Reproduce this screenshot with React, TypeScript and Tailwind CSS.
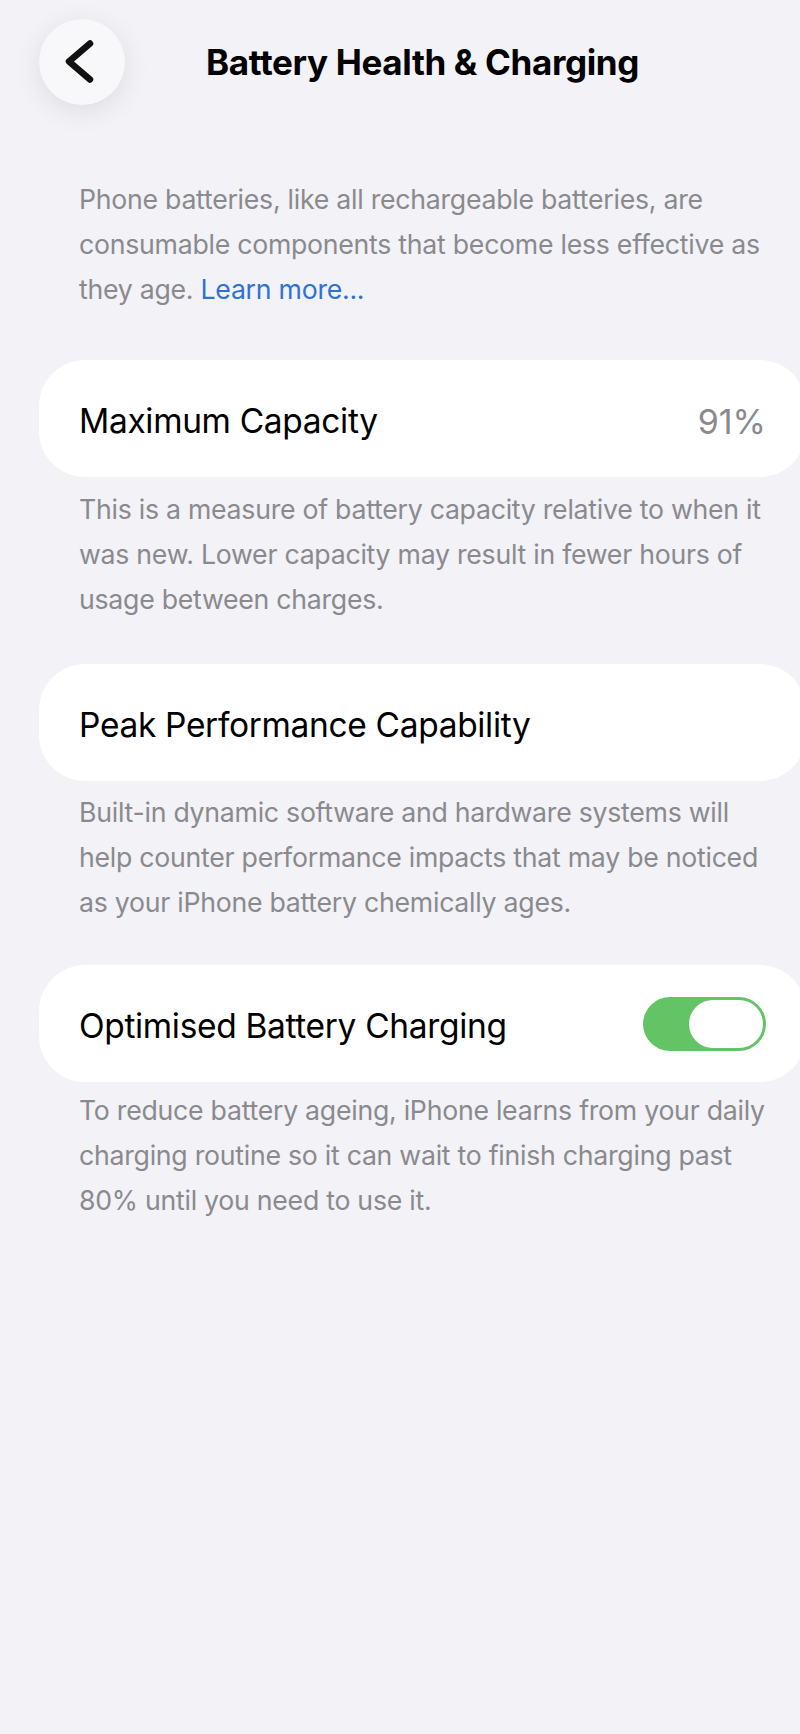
import React from "react";

const font = { fontFamily: "Inter, 'Noto Sans', sans-serif" };

function Footer({ children }: { children: React.ReactNode }) {
  return (
    <p className="pl-[79px] pr-[67px] text-[26.7px] leading-[45px] text-[#8a8a8e] tracking-[-0.01em]">
      {children}
    </p>
  );
}

function Row({ label, right }: { label: string; right?: React.ReactNode }) {
  return (
    <div className="mx-[39px] flex h-[117px] items-center justify-between rounded-[46px] bg-white pl-[40px] pr-[40px]">
      <span className="pt-[5px] text-[33.5px] text-black tracking-[-0.01em]">{label}</span>
      {right}
    </div>
  );
}

function Toggle() {
  return (
    <div className="flex h-[54px] w-[123px] items-center justify-end rounded-full bg-[#63c466] p-[3px]">
      <div className="h-[48px] w-[74px] rounded-full bg-white" />
    </div>
  );
}

export default function App() {
  return (
    <div className="min-h-[1734px] w-[800px] overflow-hidden bg-[#f2f2f7]" style={font}>
      <div className="w-[845px]">
        {/* nav bar */}
        <div className="relative flex h-[124px] items-start">
          <button className="ml-[39px] mt-[19px] h-[86px] w-[86px] rounded-full bg-[#f8f8fa] shadow-[0_6px_28px_rgba(0,0,0,0.09)]">
            <svg width="86" height="86" viewBox="0 0 86 86">
              <path d="M51 24.5 L30 42.5 L51 60.5" fill="none" stroke="#111" strokeWidth="6.5" strokeLinecap="round" strokeLinejoin="round" />
            </svg>
          </button>
          <h1 className="absolute left-0 right-0 top-[39px] text-center text-[35px] font-bold leading-[46px] text-black tracking-[-0.01em]">
            Battery Health &amp; Charging
          </h1>
        </div>

        <div className="pt-[53px]">
          <Footer>
            Phone batteries, like all rechargeable batteries, are consumable components that become less effective as they age.{" "}
            <span className="text-[#2f72d4]">Learn more...</span>
          </Footer>
        </div>

        <div className="mt-[48px]">
          <Row label="Maximum Capacity" right={<span className="pt-[5px] text-[34px] text-[#8a8a8e]">91%</span>} />
          <div className="mt-[10px]">
            <Footer>
              This is a measure of battery capacity relative to when it was new. Lower capacity may result in fewer hours of usage between charges.
            </Footer>
          </div>
        </div>

        <div className="mt-[42px]">
          <Row label="Peak Performance Capability" />
          <div className="mt-[9px]">
            <Footer>
              Built-in dynamic software and hardware systems will help counter performance impacts that may be noticed as your iPhone battery chemically ages.
            </Footer>
          </div>
        </div>

        <div className="mt-[40px]">
          <Row label="Optimised Battery Charging" right={<Toggle />} />
          <div className="mt-[6px]">
            <Footer>
              To reduce battery ageing, iPhone learns from your daily charging routine so it can wait to finish charging past 80% until you need to use it.
            </Footer>
          </div>
        </div>
      </div>
    </div>
  );
}
